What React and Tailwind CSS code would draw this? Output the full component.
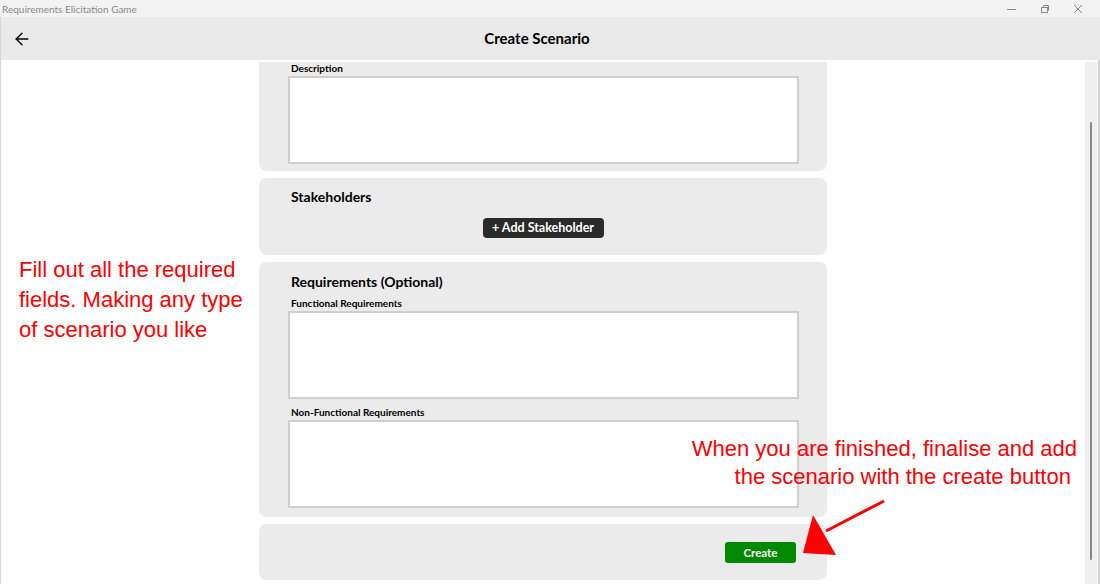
import { ArrowLeft } from "lucide-react";

const ui = { fontFamily: "Lato, 'Open Sans', sans-serif" };
const note = { fontFamily: "'Liberation Sans', Arial, sans-serif" };

function Field({ label, gap = "mt-0" }) {
  return (
    <div className={gap}>
      <div className="text-[10px] font-bold leading-[12px] text-black pl-[3px]">{label}</div>
      <div className="mt-[2px] w-[511px] h-[88px] bg-white border-2 border-[#cfcfcf]" />
    </div>
  );
}

export default function App() {
  return (
    <div className="w-[1100px] h-[584px] flex flex-col bg-white overflow-hidden relative" style={ui}>
      {/* window title bar */}
      <div className="h-[17px] bg-[#f3f3f3] flex items-center justify-between px-[2px]">
        <span className="text-[10px] text-[#8a8a8a] leading-none">Requirements Elicitation Game</span>
        <div className="flex items-center gap-[21px] pr-[14px] text-[#8a8a8a]">
          <svg width="12" height="12" viewBox="0 0 12 12"><path d="M1 6.5h9" stroke="currentColor" strokeWidth="1" /></svg>
          <svg width="12" height="12" viewBox="0 0 12 12" fill="none" stroke="currentColor" strokeWidth="1">
            <rect x="2.5" y="4.5" width="6" height="5" />
            <path d="M4.5 4.5V2.5h5v5H8.5" />
          </svg>
          <svg width="12" height="12" viewBox="0 0 12 12" stroke="currentColor" strokeWidth="1"><path d="M2 2l8 8M10 2l-8 8" /></svg>
        </div>
      </div>

      {/* app header */}
      <div className="h-[43px] bg-[#e9e9e9] border-l border-[#d6d6d6] flex items-center relative">
        <ArrowLeft size={20} strokeWidth={1.6} className="ml-[11px] text-black" />
        <div className="absolute left-0 w-[1072px] text-center text-[15px] font-bold text-black">Create Scenario</div>
      </div>

      {/* body */}
      <div className="flex-1 flex border-l border-[#d6d6d6] border-r-2 border-r-[#cfcfcf]">
        <div className="flex-1 pt-[2px]">
          <div className="ml-[258px] w-[568px] flex flex-col gap-[7px]">
            <div className="bg-[#ebebeb] rounded-b-[8px] pl-[29px] pb-[7px]">
              <Field label="Description" />
            </div>

            <div className="bg-[#ebebeb] rounded-[8px] h-[77px] pt-[10px] flex flex-col">
              <div className="pl-[32px] text-[14px] font-bold text-black leading-[17px]">Stakeholders</div>
              <div className="flex justify-center mt-[13px]">
                <button className="h-[20px] w-[121px] rounded-[4px] bg-[#2b2b2b] text-white text-[12.5px] font-bold leading-none">
                  + Add Stakeholder
                </button>
              </div>
            </div>

            <div className="bg-[#ebebeb] rounded-[8px] h-[255px] pl-[29px] pt-[11px]">
              <div className="pl-[3px] text-[14px] font-bold text-black leading-[17px] mb-[7px]">Requirements (Optional)</div>
              <Field label="Functional Requirements" />
              <Field label="Non-Functional Requirements" gap="mt-[7px]" />
            </div>

            <div className="bg-[#ebebeb] rounded-[8px] h-[56px] flex items-center justify-end pr-[31px] pt-[1px]">
              <button className="h-[21px] w-[71px] rounded-[3px] bg-[#008a00] text-white text-[11.5px] font-bold leading-none">
                Create
              </button>
            </div>
          </div>
        </div>

        {/* scrollbar */}
        <div className="w-[12px] mr-[1px] mt-[2px] bg-[#efefef] flex justify-center">
          <div className="w-[2px] mt-[60px] mb-[24px] bg-[#8a8a8a] rounded-full" />
        </div>
      </div>

      {/* annotations */}
      <div className="absolute left-[19px] top-[255px] text-[22px] leading-[30px] text-[#ff0000]" style={note}>
        Fill out all the required<br />
        fields. Making any type<br />
        of scenario you like
      </div>
      <div className="absolute right-[23px] top-[435px] text-[22px] leading-[28px] text-[#ff0000] text-right" style={note}>
        When you are finished, finalise and add<br />
        the scenario with the create button&nbsp;
      </div>
      <svg className="absolute left-0 top-0 pointer-events-none" width="1100" height="584">
        <line x1="884" y1="501" x2="826" y2="531" stroke="#ff0000" strokeWidth="3" />
        <polygon points="813,515 803,553 836,555" fill="#ff0000" />
      </svg>
    </div>
  );
}
